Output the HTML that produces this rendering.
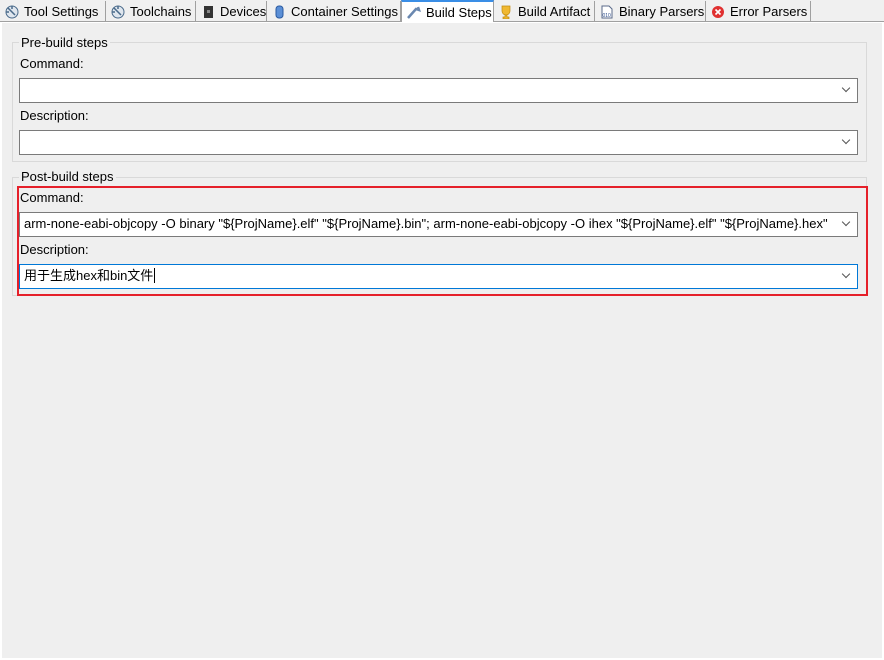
<!DOCTYPE html>
<html><head><meta charset="utf-8"><style>
*{box-sizing:border-box;margin:0;padding:0}
body{width:884px;height:660px;background:#fff;position:relative;overflow:hidden;font-family:"Liberation Sans","Noto Sans CJK SC",sans-serif;font-size:13px;color:#000}
.tabs{position:absolute;left:0;top:0;width:884px;height:22px;background:#f0f0f0;border-bottom:1px solid #a0a0a0}
.tab{position:absolute;top:1px;height:20px;border-right:1px solid #a0a0a0;line-height:22px;padding-left:24px;white-space:nowrap}
.tab .ic{position:absolute;left:5px;top:4px;width:14px;height:14px}
.tab.sel{background:#fff;top:0;height:22px;border-top:2px solid #3a8ee6;border-left:1px solid #a0a0a0;line-height:21px}
.content{position:absolute;left:2px;top:23px;width:880px;height:635px;background:#efefef}
.grp{position:absolute;left:12px;width:855px;border:1px solid #d9d9d9}
.glab{position:absolute;background:#efefef;padding:0 2px;left:19px;line-height:16px}
.lab{position:absolute;left:20px;line-height:16px}
.combo{position:absolute;left:19px;width:839px;height:25px;background:#fff;border:1px solid #7a7a7a;line-height:22px;padding-left:4px;padding-right:20px;white-space:nowrap;overflow:hidden}
.combo .arr{position:absolute;right:0;top:0;width:18px;height:23px;background:#fff}
.combo .arr:after{content:"";position:absolute;left:4px;top:6px;width:5px;height:5px;border-right:1px solid #555;border-bottom:1px solid #555;transform:rotate(45deg)}
</style></head><body>
<div class="tabs">
<div class="tab" style="left:0;width:106px"><svg class="ic" viewBox="0 0 14 14"><circle cx="7" cy="7" r="6" fill="#dfe6ee" stroke="#4a6a8a"/><path d="M3 3L10 10M7 1v3M1 7h3" stroke="#4a6a8a" stroke-width="1.5"/></svg>Tool Settings</div>
<div class="tab" style="left:106px;width:90px"><svg class="ic" viewBox="0 0 14 14"><circle cx="7" cy="7" r="6" fill="#dfe6ee" stroke="#4a6a8a"/><path d="M3 3L10 10M7 1v3M1 7h3" stroke="#4a6a8a" stroke-width="1.5"/></svg>Toolchains</div>
<div class="tab" style="left:196px;width:71px"><svg class="ic" viewBox="0 0 14 14"><rect x="3" y="1" width="9" height="12" fill="#333"/><rect x="6" y="5" width="3" height="3" fill="#888"/></svg>Devices</div>
<div class="tab" style="left:267px;width:134px"><svg class="ic" viewBox="0 0 14 14"><rect x="4" y="1" width="7" height="12" rx="3" fill="#5b8fd6" stroke="#2a5aa0"/></svg>Container Settings</div>
<div class="tab sel" style="left:401px;width:93px"><svg class="ic" viewBox="0 0 14 14" style="top:3px"><path d="M1 13L9 4l3 1-1-3" stroke="#6a88b0" stroke-width="2.5" fill="none"/></svg>Build Steps</div>
<div class="tab" style="left:494px;width:101px"><svg class="ic" viewBox="0 0 14 14"><path d="M3 1h8v5a4 4 0 0 1-8 0zM6 10h2v2h2v2H4v-2h2z" fill="#f0b830" stroke="#c08a10" stroke-width=".7"/></svg>Build Artifact</div>
<div class="tab" style="left:595px;width:111px"><svg class="ic" viewBox="0 0 14 14"><path d="M2 1h7l3 3v9H2z" fill="#fff" stroke="#5a6a8a"/><text x="2.5" y="12" font-size="5" fill="#2a4a8a" font-family="Liberation Sans">010</text></svg>Binary Parsers</div>
<div class="tab" style="left:706px;width:105px"><svg class="ic" viewBox="0 0 14 14"><circle cx="7" cy="7" r="6" fill="#e03030"/><path d="M4.5 4.5l5 5M9.5 4.5l-5 5" stroke="#fff" stroke-width="1.6"/></svg>Error Parsers</div>
</div>
<div class="content"></div>
<div class="grp" style="top:42px;height:120px"></div>
<div class="glab" style="top:35px">Pre-build steps</div>
<div class="lab" style="top:56px">Command:</div>
<div class="combo" style="top:78px"><span class="arr"></span></div>
<div class="lab" style="top:108px">Description:</div>
<div class="combo" style="top:130px"><span class="arr"></span></div>
<div class="grp" style="top:177px;height:119px"></div>
<div class="glab" style="top:169px">Post-build steps</div>
<div style="position:absolute;left:17px;top:186px;width:851px;height:110px;border:2px solid #e5202a"></div>
<div class="lab" style="top:190px">Command:</div>
<div class="combo" style="top:212px">arm-none-eabi-objcopy -O binary "${ProjName}.elf" "${ProjName}.bin"; arm-none-eabi-objcopy -O ihex "${ProjName}.elf" "${ProjName}.hex"<span class="arr"></span></div>
<div class="lab" style="top:242px">Description:</div>
<div class="combo" style="top:264px;border-color:#0078d7">用于生成hex和bin文件<span style="border-left:1px solid #000;margin-left:1px"></span><span class="arr"></span></div>
</body></html>
